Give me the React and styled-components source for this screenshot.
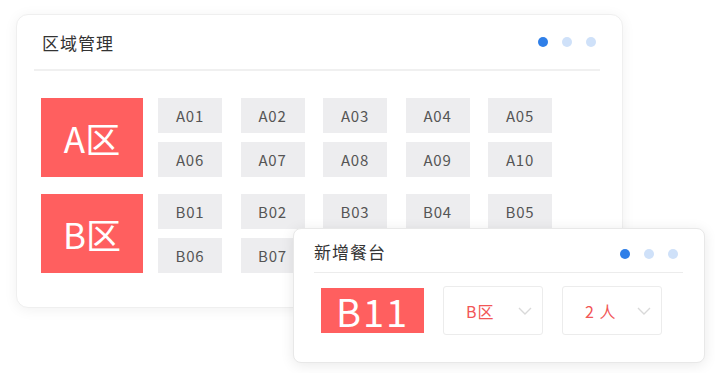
import React from "react";
import styled, { createGlobalStyle } from "styled-components";

const GlobalStyle = createGlobalStyle`
  body {
    margin: 0;
    background: #fff;
    font-family: "Noto Sans CJK SC", "Noto Sans", sans-serif;
  }
`;

const zones = [
  { name: "A区", tables: ["A01", "A02", "A03", "A04", "A05", "A06", "A07", "A08", "A09", "A10"] },
  { name: "B区", tables: ["B01", "B02", "B03", "B04", "B05", "B06", "B07", "B08", "B09", "B10"] },
];

function Dots() {
  return (
    <DotRow>
      <Dot active />
      <Dot />
      <Dot />
    </DotRow>
  );
}

function Chevron() {
  return (
    <svg width="14" height="8" viewBox="0 0 14 8" fill="none">
      <path d="M1 1 L7 7 L13 1" stroke="#d9d9d9" strokeWidth="1.4" />
    </svg>
  );
}

export default function App() {
  return (
    <Stage>
      <GlobalStyle />
      <MainCard>
        <Header>
          <Title>区域管理</Title>
          <Dots />
        </Header>
        <ZoneList>
          {zones.map((z) => (
            <ZoneRow key={z.name}>
              <ZoneBlock>{z.name}</ZoneBlock>
              <TableGrid>
                {z.tables.map((t) => (
                  <Tile key={t}>{t}</Tile>
                ))}
              </TableGrid>
            </ZoneRow>
          ))}
        </ZoneList>
      </MainCard>

      <AddCard>
        <AddHeader>
          <Title>新增餐台</Title>
          <Dots />
        </AddHeader>
        <AddBody>
          <NewTable>B11</NewTable>
          <Select>
            <span>B区</span>
            <Chevron />
          </Select>
          <Select>
            <span>2 人</span>
            <Chevron />
          </Select>
        </AddBody>
      </AddCard>
    </Stage>
  );
}

const Stage = styled.div`
  position: relative;
  width: 715px;
  height: 373px;
  padding: 14px 0 0 16px;
  box-sizing: border-box;
`;

const MainCard = styled.div`
  width: 607px;
  height: 294px;
  box-sizing: border-box;
  background: #fff;
  border: 1px solid #efefef;
  border-radius: 12px;
  box-shadow: 0 2px 14px rgba(0, 0, 0, 0.06);
  padding: 0 22px 0 17px;
`;

const Header = styled.div`
  display: flex;
  align-items: center;
  justify-content: space-between;
  height: 54px;
  border-bottom: 2px solid #f0f0f0;
  padding: 0 4px 0 8px;
`;

const Title = styled.div`
  font-size: 17px;
  color: #333;
  letter-spacing: 1px;
`;

const DotRow = styled.div`
  display: flex;
  gap: 14px;
`;

const Dot = styled.span`
  width: 10px;
  height: 10px;
  border-radius: 50%;
  background: ${(p) => (p.active ? "#2f7fe8" : "#cfe1f9")};
`;

const ZoneList = styled.div`
  display: flex;
  flex-direction: column;
  gap: 17px;
  padding: 27px 0 0 7px;
`;

const ZoneRow = styled.div`
  display: flex;
  gap: 15px;
`;

const ZoneBlock = styled.div`
  width: 102px;
  height: 79px;
  background: #ff5f5f;
  color: #fff;
  font-size: 35px;
  display: flex;
  align-items: center;
  justify-content: center;
`;

const TableGrid = styled.div`
  display: grid;
  grid-template-columns: repeat(5, 64px);
  grid-auto-rows: 35px;
  column-gap: 18.5px;
  row-gap: 9px;
`;

const Tile = styled.div`
  background: #ededef;
  color: #555;
  font-size: 15px;
  letter-spacing: 0.8px;
  display: flex;
  align-items: center;
  justify-content: center;
`;

const AddCard = styled.div`
  position: absolute;
  left: 293px;
  top: 228px;
  width: 412px;
  height: 135px;
  box-sizing: border-box;
  background: #fff;
  border: 1px solid #e8e8e8;
  border-radius: 8px;
  box-shadow: 0 2px 14px rgba(0, 0, 0, 0.09);
  padding: 0 21px 0 20px;
`;

const AddHeader = styled.div`
  display: flex;
  align-items: center;
  justify-content: space-between;
  height: 41px;
  border-bottom: 1px solid #ececec;
  padding: 2px 5px 0 0;

  ${DotRow} {
    margin-top: 5px;
  }
`;

const AddBody = styled.div`
  display: flex;
  align-items: center;
  padding: 13px 0 0 7px;
  gap: 19px;
`;

const NewTable = styled.div`
  width: 103px;
  height: 45px;
  background: #ff5f5f;
  color: #fff;
  font-size: 38px;
  letter-spacing: 2px;
  display: flex;
  align-items: center;
  justify-content: center;
`;

const Select = styled.div`
  width: 100px;
  height: 49px;
  box-sizing: border-box;
  border: 1px solid #ececec;
  border-radius: 3px;
  display: flex;
  align-items: center;
  justify-content: space-between;
  padding: 0 10px 0 22px;
  color: #f25656;
  font-size: 16px;
  letter-spacing: 1px;
`;
